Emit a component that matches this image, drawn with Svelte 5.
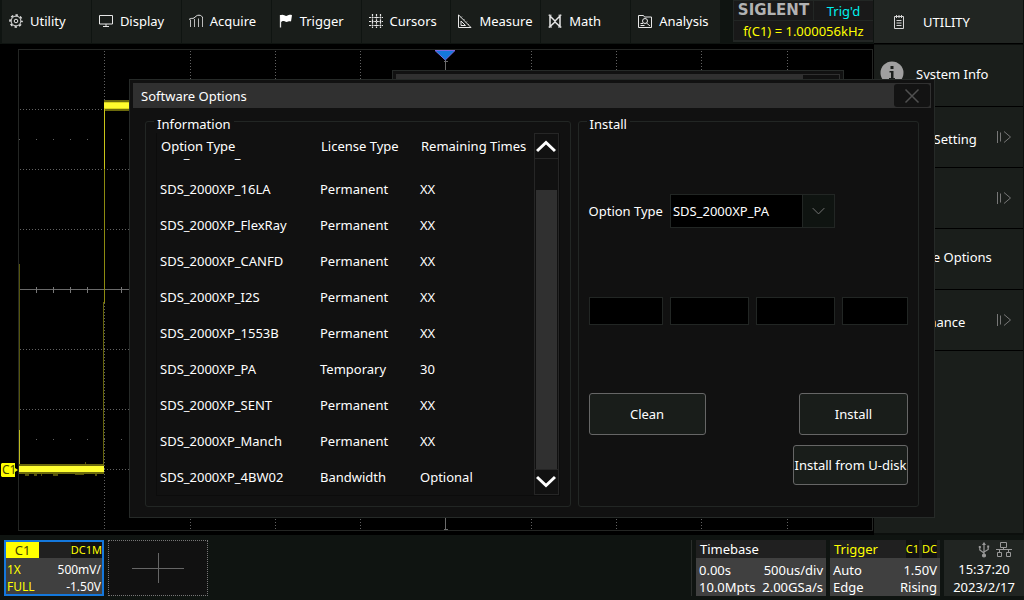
<script>
  const nav = ['Utility', 'Display', 'Acquire', 'Trigger', 'Cursors', 'Measure', 'Math', 'Analysis'];

  const side = [
    { label: 'System Info', icon: true, sub: false },
    { label: 'System Setting', icon: false, sub: true },
    { label: 'I/O', icon: false, sub: true },
    { label: 'Software Options', icon: false, sub: false },
    { label: 'Maintenance', icon: false, sub: true }
  ];

  const options = [
    ['SDS_2000XP_FG', 'Permanent', 'XX'],
    ['SDS_2000XP_16LA', 'Permanent', 'XX'],
    ['SDS_2000XP_FlexRay', 'Permanent', 'XX'],
    ['SDS_2000XP_CANFD', 'Permanent', 'XX'],
    ['SDS_2000XP_I2S', 'Permanent', 'XX'],
    ['SDS_2000XP_1553B', 'Permanent', 'XX'],
    ['SDS_2000XP_PA', 'Temporary', '30'],
    ['SDS_2000XP_SENT', 'Permanent', 'XX'],
    ['SDS_2000XP_Manch', 'Permanent', 'XX'],
    ['SDS_2000XP_4BW02', 'Bandwidth', 'Optional']
  ];

  const gridX = [104, 190, 275, 360, 531, 616, 701, 787];
  const gridY = [109, 169, 229, 349, 409, 469];
  const ticks = [19, 36, 53, 70, 87, 104, 121];
  let selected = $state('SDS_2000XP_PA');
</script>

<div class="screen">
  <div class="main">
    <div class="left">
      <header class="topbar">
        <nav>
          {#each nav as item}
            <button class="nav-item">
              <svg width="14" height="14" viewBox="0 0 14 14" fill="none" stroke="#e6e6e6" aria-hidden="true">
                {#if item === 'Utility'}
                  <circle cx="7" cy="7" r="4.9" />
                  <circle cx="7" cy="7" r="6" stroke-width="1.6" stroke-dasharray="2.4 2.31" stroke-dashoffset="1.2" />
                  <circle cx="7" cy="7" r="1.8" />
                {:else if item === 'Display'}
                  <path d="M.5 1.5h13v8.5H.5zM7 10v2.5M4 12.5h6" />
                {:else if item === 'Acquire'}
                  <path d="M1.5 13V5.500M5.500 13V5M9.500 13V4.500M13.500 13V3" stroke="#bbb" />
                  <path d="M0 5.500C2 3.500 3.500 5 5 4S7.500 1 10 1.200S12.500 2 13.500 3.500" />
                {:else if item === 'Trigger'}
                  <path d="M1.500 1v12.500" stroke-width="1.300" />
                  <path d="M1 1.500C4-.5 6 2.500 8 1.800C10 1 11 .5 13 1.200L12 7.500C9.500 6.500 8.500 8.800 6 7.500C4 6.500 3 7.500 2 8Z" fill="#fff" stroke="none" />
                {:else if item === 'Cursors'}
                  <path d="M0 3.500h14M0 7.500h14M0 11.500h14M3.500 0v14M7.500 0v14M11.500 0v14" stroke-dasharray="2 .6" stroke-width="1.200" />
                {:else if item === 'Measure'}
                  <path d="M.5.8V13.500H13zM3 7v4.500h4.500z" />
                  <path d="M4 2.500l-1 1M6.500 5l-1 1M9 7.500l-1 1M11 10l-1 1" stroke-width=".7" />
                {:else if item === 'Math'}
                  <path d="M2 12.500V2L7 7l5-5v10.500L7 8z" stroke-width="1.500" />
                  <path d="M.5 1.200h3M10.500 1.200h3M.5 13h3.500M10 13h3.500" />
                {:else}
                  <path d="M.5 1.500h5l1 1.500h7v10.500H.5z" />
                  <circle cx="7" cy="7" r="2.500" />
                  <path d="M8.500 9l3.500 3M2.500 9.500h2.500M2.500 11.500h4" />
                {/if}
              </svg>
              {item}
            </button>
          {/each}
        </nav>
        <div class="status">
          <span class="brand">SIGLENT</span>
          <span class="trig">Trig'd</span>
          <span class="freq">f(C1) = 1.000056kHz</span>
        </div>
      </header>

      <main class="scope">
        <svg viewBox="0 44 874 491" preserveAspectRatio="none" aria-hidden="true">
          <g shape-rendering="crispEdges" fill="none">
            <rect x="18.500" y="49.500" width="854" height="481" stroke="#242624" />
            {#each gridX as x}
              <path d="M{x}.5 51V530" stroke="#626262" stroke-dasharray="1 2" />
            {/each}
            {#each gridY as y}
              <path d="M20 {y}.5H872" stroke="#626262" stroke-dasharray="1 2" />
            {/each}
            <path d="M19 289.500H872M445.500 60V530M444 529.500h4M444 61.500h4" stroke="#6a6a6a" />
            {#each ticks as t}
              <path d="M{t}.5 287v6" stroke="#777" />
              <path d="M{t}.5 139v1M{t}.5 439v1" stroke="#626262" />
            {/each}
          </g>
          <g shape-rendering="crispEdges">
            <rect x="104" y="100" width="26" height="11" fill="#6c6a0c" />
            <rect x="104" y="102" width="26" height="7" fill="#d8d41c" />
            <rect x="104" y="103" width="26" height="5" fill="#fffb2e" />
            <rect x="104" y="109" width="1" height="194" fill="#8c8a10" />
            <rect x="104" y="109" width="1" height="60" fill="#c8c418" />
            <rect x="103" y="302" width="1" height="163" fill="#66640c" />
            <rect x="19" y="264" width="1" height="201" fill="#55550c" />
            <rect x="19" y="430" width="1" height="35" fill="#c0bc20" />
            <rect x="19" y="464" width="85" height="10" fill="#6c6a0c" />
            <path d="M25 474h4v2h-4zM34 474h3v2h-3zM41 474h1v2h-1zM53 474h5v2h-5zM75 474h9v1h-9zM95 474h2v2h-2zM85 462h1v2h-1z" fill="#55530a" />
            <rect x="19" y="466" width="85" height="6" fill="#ffff30" />
          </g>
          <path d="M435 50.500h20L445.300 60z" fill="#1478dc" stroke="#7a6ae0" />
          <path d="M2 463h13v5l3 2-3 2v5H2L1 476v-12z" fill="#ff0" />
          <text x="2" y="474" class="marker">C1</text>
        </svg>
        <div class="back-window"><div></div></div>
      </main>
    </div>

    <aside>
      <div class="side-title">
        <svg width="12" height="14" viewBox="0 0 12 14" fill="none" stroke="#d5d5d5" aria-hidden="true">
          <path d="M1.500 1.500h9v12h-9z" />
          <path d="M3.500 5.500h5M3.500 8h5M3.500 10.500h5" />
          <path d="M3.500 0v3M6 0v3M8.500 0v3" />
        </svg>
        UTILITY
      </div>
      <div class="side-list">
        {#each side as s}
          <button class="side-item" class:sub={s.sub}>
            {#if s.icon}
              <svg width="24" height="24" viewBox="0 0 24 24" aria-hidden="true">
                <circle cx="12" cy="12" r="11.500" fill="#a0a0a0" />
                <path d="M10.500 5h3v3h-3zM9.500 10h4v7h1.500v1.500H9V17h2v-5.500H9.500z" fill="#1a1e1b" />
              </svg>
            {/if}
            <span>{s.label}</span>
            {#if s.sub}
              <svg class="arrow" width="16" height="14" viewBox="0 0 16 14" fill="none" stroke="#777" aria-hidden="true">
                <path d="M1.500 1v12M4.500 2.500v9M8 1.500l6.500 5.500L8 12.500" />
              </svg>
            {/if}
          </button>
        {/each}
      </div>
    </aside>
  </div>

  <footer>
    <section class="card channel">
      <div class="card-head"><b>C1</b><em>DC1M</em></div>
      <div class="card-body">
        <span class="y">1X</span><span>500mV/</span>
        <span class="y">FULL</span><span>-1.50V</span>
      </div>
    </section>
    <button class="add" aria-label="Add channel">
      <svg width="52" height="30" viewBox="0 0 52 30" stroke="#666" aria-hidden="true"><path d="M0 15.500h52M26.500 0v30" /></svg>
    </button>
    <div class="rule"></div>
    <section class="card timebase">
      <div class="card-head"><span>Timebase</span></div>
      <div class="card-body">
        <span>0.00s</span><span>500us/div</span>
        <span>10.0Mpts</span><span>2.00GSa/s</span>
      </div>
    </section>
    <section class="card trigger">
      <div class="card-head"><span class="y">Trigger</span><span class="tags"><em>C1</em><em>DC</em></span></div>
      <div class="card-body">
        <span>Auto</span><span>1.50V</span>
        <span>Edge</span><span>Rising</span>
      </div>
    </section>
    <section class="clock">
      <div class="ports">
        <svg width="12" height="16" viewBox="0 0 12 16" fill="none" stroke="#999" stroke-width="1.200" aria-hidden="true">
          <path d="M6 2v11M1.800 5v3L6 11M10.200 4.500V7.500L6 10" />
          <path d="M4 3l2-3 2 3z" fill="#999" stroke="none" />
          <circle cx="6" cy="13.500" r="1.500" fill="#999" />
          <path d="M.8 4h2v2h-2zM9.200 3.500h2v2h-2z" fill="#999" stroke="none" />
        </svg>
        <svg width="16" height="16" viewBox="0 0 16 16" fill="none" stroke="#999" aria-hidden="true">
          <path d="M4.500 .5h6v5h-6zM1.500 10.500h4v4h-4zM10.500 10.500h4v4h-4zM7.500 5.500v2M0 7.500h16M3.500 7.500v3M12.500 7.500v3" />
        </svg>
      </div>
      <div>15:37:20</div>
      <div>2023/2/17</div>
    </section>
  </footer>

  <div class="dialog" role="dialog" aria-label="Software Options">
    <div class="title">
      <h1>Software Options</h1>
      <button class="close" aria-label="Close">
        <svg width="16" height="16" viewBox="0 0 16 16" stroke="#505050" stroke-width="1.500" aria-hidden="true"><path d="M1.500 1.500l13 13M14.500 1.500l-13 13" /></svg>
      </button>
    </div>
    <div class="panels">
      <fieldset class="info">
        <legend>Information</legend>
        <div class="list">
          <table>
            <thead>
              <tr><th>Option Type</th><th>License Type</th><th>Remaining Times</th></tr>
            </thead>
            <tbody>
              {#each options as row}
                <tr>{#each row as cell}<td>{cell}</td>{/each}</tr>
              {/each}
            </tbody>
          </table>
          <div class="scroll">
            <button aria-label="Scroll up">
              <svg width="20" height="14" viewBox="0 0 20 14" fill="none" stroke="#fff" stroke-width="3" aria-hidden="true"><path d="M1 12l9-8.500 9 8.500" /></svg>
            </button>
            <div class="track"><div class="thumb"></div></div>
            <button aria-label="Scroll down">
              <svg width="20" height="14" viewBox="0 0 20 14" fill="none" stroke="#fff" stroke-width="3" aria-hidden="true"><path d="M1 2l9 8.500 9-8.500" /></svg>
            </button>
          </div>
        </div>
      </fieldset>

      <fieldset class="install">
        <legend>Install</legend>
        <div class="fields">
          <label for="opt">Option Type</label>
          <div class="combo">
            <select id="opt" bind:value={selected}>
              <option>SDS_2000XP_PA</option>
            </select>
            <svg viewBox="0 0 32 32" width="32" fill="none" stroke="#777" aria-hidden="true"><path d="M10 13l6 6 6-6" /></svg>
          </div>
        </div>
        <div class="fields keys">
          {#each [1, 2, 3, 4] as n}
            <input type="text" aria-label="License key part {n}" />
          {/each}
        </div>
        <div class="actions">
          <button class="clean">Clean</button>
          <button class="go">Install</button>
        </div>
        <div class="actions last">
          <button class="disk">Install from U-disk</button>
        </div>
      </fieldset>
    </div>
  </div>
</div>

<style>
  :global(body) {
    margin: 0;
    background: #000;
  }
  .screen {
    position: relative;
    display: flex;
    flex-direction: column;
    min-height: 100vh;
    overflow: hidden;
    background: #000;
    color: #fff;
    font: 13px/18px 'Noto Sans', sans-serif;
  }
  .screen *,
  .screen {
    box-sizing: border-box;
  }
  button,
  input,
  select {
    margin: 0;
    padding: 0;
    border: 0;
    border-radius: 0;
    color: inherit;
    font: inherit;
    background: none;
  }
  svg {
    display: block;
    flex: none;
  }
  .main {
    flex: 1;
    display: grid;
    grid-template-columns: minmax(0, 1fr) 150px;
  }
  .left {
    display: flex;
    flex-direction: column;
  }
  .topbar {
    display: flex;
    justify-content: space-between;
    height: 44px;
    padding-right: 1px;
    background: #0f1411;
  }
  nav {
    flex: 0 1 720px;
    display: grid;
    grid-template-columns: repeat(8, 1fr);
    gap: 1px;
    padding: 0 0 1px 2px;
  }
  .nav-item {
    display: flex;
    align-items: center;
    gap: 7px;
    padding: 0 0 2px 7px;
    background: #191d1a;
    white-space: nowrap;
  }
  .status {
    display: grid;
    grid-template-columns: 79px 59px;
    grid-template-rows: 19px 19px;
    gap: 1px;
    align-self: flex-start;
    padding: 1px 0 1px 1px;
    border-bottom: 1px solid #222624;
    background: #222624;
    line-height: 20px;
    text-align: center;
  }
  .status span {
    background: #191919;
  }
  .status .brand {
    color: #b2b2b2;
    font: bold 15px/18px 'DejaVu Sans', sans-serif;
  }
  .trig {
    color: #00f0f0;
  }
  .status .freq {
    grid-column: 1 / 3;
    color: #ff0;
  }
  .scope {
    position: relative;
    flex: 1;
    display: flex;
  }
  .scope > svg {
    width: 100%;
    height: 100%;
    min-height: 491px;
  }
  .marker {
    font: 12px 'Noto Sans', sans-serif;
    fill: #444400;
  }
  .back-window {
    position: absolute;
    top: 26px;
    left: 392px;
    right: 30px;
    height: 40px;
    padding: 3px;
    border: 1px solid #262a28;
    background: #111;
  }
  .back-window div {
    height: 100%;
    border: 1px solid #303030;
    background: linear-gradient(#111, #111) right / 36px 100% no-repeat #303030;
  }
  aside {
    display: flex;
    flex-direction: column;
    gap: 1px;
    padding: 0 1px 2px 0;
    background: #0c0f0d;
  }
  .side-title {
    display: flex;
    align-items: center;
    gap: 18px;
    height: 44px;
    padding-left: 19px;
    border-bottom: 1px solid #000;
    background: #212522;
  }
  .side-list {
    flex: 1;
    background: #1a1e1b;
  }
  .side-item {
    display: flex;
    align-items: center;
    width: 100%;
    height: 61px;
    padding: 0 11px 0 12px;
    border-bottom: 1px solid #000;
  }
  .side-item:first-child {
    gap: 12px;
    height: 62px;
    padding: 0 6px;
  }
  .side-item:first-child svg {
    margin-bottom: 6px;
  }
  .side-item span {
    padding-bottom: 4px;
    white-space: nowrap;
  }
  .side-item.sub span {
    padding: 4px 0 0;
  }
  .arrow {
    margin-left: auto;
  }
  footer {
    display: flex;
    gap: 4px;
    height: 65px;
    padding: 5px 0 4px 4px;
    background: #0f1411;
  }
  .card {
    display: flex;
    flex-direction: column;
    background: #404040;
  }
  .card-head {
    display: flex;
    justify-content: space-between;
    height: 18px;
    padding: 0 3px 0 4px;
    background: #202020;
  }
  .card-body {
    display: grid;
    grid-template-columns: auto auto;
    justify-content: space-between;
    align-content: center;
    flex: 1;
    padding: 4px 3px 0;
    line-height: 17px;
  }
  .card-body span:nth-child(even) {
    text-align: right;
  }
  .y {
    color: #ff0;
  }
  em {
    background: #111;
    color: #ff0;
    font-size: 11px;
    font-style: normal;
  }
  .tags {
    display: flex;
    gap: 3px;
  }
  .channel {
    width: 100px;
    border: 2px solid #1478dc;
  }
  .channel .card-head {
    height: 16px;
    padding: 0;
    line-height: 16px;
  }
  .channel .card-body {
    padding: 3px 1px 0;
    font-size: 12px;
  }
  .channel b {
    width: 33px;
    background: #ff0;
    color: #444400;
    font-weight: normal;
    text-align: center;
  }
  .add {
    display: grid;
    place-items: center;
    width: 100px;
    border: 1px dotted #777;
    background: #111;
  }
  .rule {
    width: 1px;
    margin-left: auto;
    background: #2a2e2b;
  }
  .timebase {
    width: 130px;
  }
  .trigger {
    width: 110px;
  }
  .clock {
    width: 80px;
    background: #212522;
    text-align: center;
  }
  .ports {
    display: flex;
    justify-content: center;
    gap: 6px;
    height: 20px;
    padding: 2px 0 0 22px;
  }
  .dialog {
    position: absolute;
    top: 79px;
    left: 129px;
    right: 89px;
    padding: 3px;
    border: 1px solid #262a28;
    background: #111;
  }
  .title {
    display: flex;
    align-items: center;
    justify-content: space-between;
    height: 25px;
    padding: 0 1px 0 8px;
    background: #303030;
  }
  h1 {
    margin: 0;
    font: inherit;
  }
  .close {
    display: grid;
    place-items: center;
    width: 36px;
    height: 23px;
    border-radius: 3px;
    background: #131313;
  }
  .panels {
    display: grid;
    grid-template-columns: 425fr 341fr;
    gap: 7px;
    padding: 1px 12px 7px;
  }
  fieldset {
    min-width: 0;
    margin: 0;
    padding: 0 10px;
    border: 1px solid #222624;
    border-radius: 3px;
  }
  .info {
    padding-bottom: 10px;
  }
  legend {
    margin-left: -2px;
    padding: 6px 3px 0;
  }
  .list {
    display: flex;
    justify-content: space-between;
    border: 1px solid #0c0c0c;
    border-top: 0;
  }
  table {
    flex: 1;
    display: block;
  }
  thead,
  tbody {
    display: flex;
    flex-direction: column;
    justify-content: flex-end;
    overflow: hidden;
  }
  tbody {
    height: 337px;
  }
  tr {
    flex: none;
    display: grid;
    grid-template-columns: 160px 100px 1fr;
    align-items: center;
    height: 36px;
    padding-left: 3px;
  }
  thead tr {
    height: 25px;
    padding-left: 4px;
  }
  th,
  td {
    padding: 0;
    font-weight: normal;
    text-align: left;
    white-space: nowrap;
  }
  .scroll {
    display: flex;
    flex-direction: column;
    width: 25px;
  }
  .scroll button {
    display: grid;
    place-items: center;
    height: 26px;
    border: 1px solid #262626;
  }
  .track {
    flex: 1;
    padding: 31px 1px 0;
    border: 1px solid #262626;
    border-width: 0 1px;
  }
  .thumb {
    height: 100%;
    background: #303030;
  }
  .fields {
    display: grid;
    grid-template-columns: 74fr 79fr 79fr 66fr;
    gap: 7px;
    align-items: center;
    margin-top: 61px;
    white-space: nowrap;
  }
  .keys {
    margin-top: 69px;
  }
  .combo {
    grid-column: 2 / 4;
    display: flex;
    height: 34px;
    border: 1px solid #222624;
  }
  select {
    flex: 1;
    min-width: 0;
    padding-left: 2px;
    appearance: none;
    background: #000;
  }
  .combo svg {
    border-left: 1px solid #222624;
    background: #0f1411;
    pointer-events: none;
  }
  input {
    width: 100%;
    height: 28px;
    border: 1px solid #222624;
    background: #000;
  }
  .actions {
    display: flex;
    justify-content: space-between;
    margin-top: 68px;
  }
  .actions.last {
    justify-content: flex-end;
    margin-top: 10px;
  }
  .actions button {
    height: 42px;
    border: 1px solid #666;
    border-radius: 3px;
    background: #191d1a;
    white-space: nowrap;
  }
  .actions .clean {
    width: 117px;
  }
  .actions .go {
    width: 109px;
  }
  .actions .disk {
    width: 115px;
    height: 40px;
  }
</style>
